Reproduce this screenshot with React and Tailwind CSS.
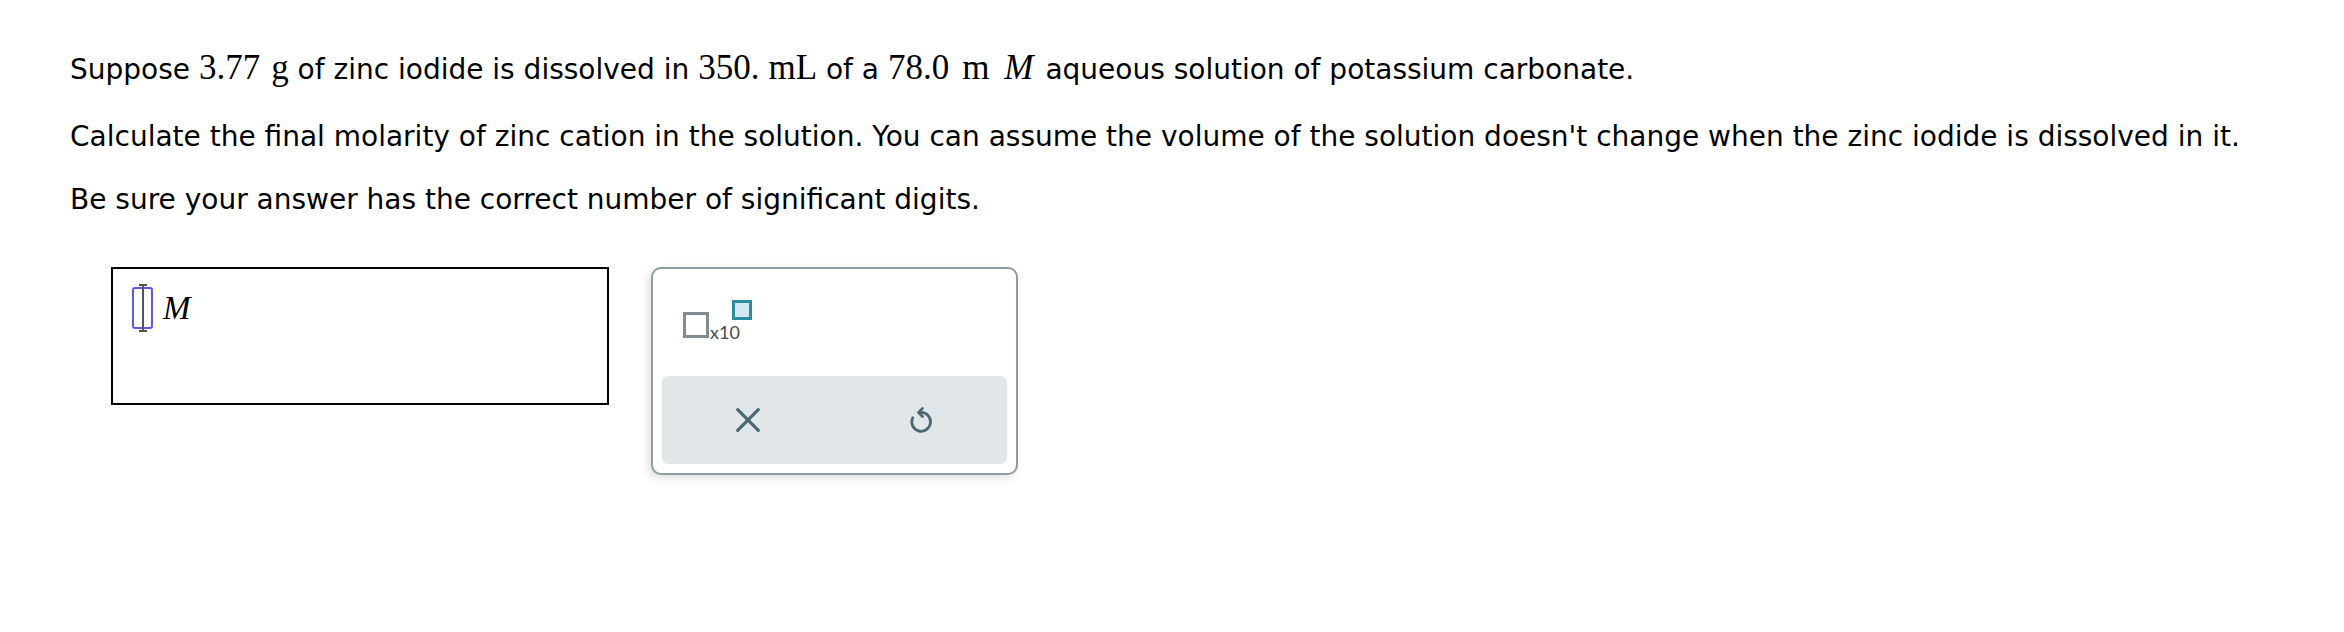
import React from 'react';

const serif = { fontFamily: '"Liberation Serif", "Times New Roman", serif' };

function Num({ children, className = '' }) {
  return (
    <span className={`text-[35px] leading-none ${className}`} style={serif}>
      {children}
    </span>
  );
}

function UndoIcon() {
  return (
    <svg width="30" height="30" viewBox="0 0 24 24" fill="none" stroke="#4b6872" strokeWidth="2.2" strokeLinecap="round" strokeLinejoin="round">
      <path d="M5.4 10.2 A7.5 7.5 0 1 0 12 6" />
      <path d="M13.2 2.8 L10 6 L13.2 9.2" />
    </svg>
  );
}

function CloseIcon() {
  return (
    <svg width="26" height="26" viewBox="0 0 24 24" fill="none" stroke="#4b6872" strokeWidth="3" strokeLinecap="round">
      <path d="M2.5 2.5 L21.5 21.5" />
      <path d="M21.5 2.5 L2.5 21.5" />
    </svg>
  );
}

export default function App() {
  return (
    <div
      className="min-h-screen bg-white text-black pl-[70px] pt-[50px]"
      style={{ fontFamily: '"DejaVu Sans", Verdana, sans-serif' }}
    >
      <p className="text-[28px] leading-[40px] whitespace-nowrap">
        Suppose <Num>3.77</Num><Num className="ml-[11px]">g</Num> of zinc iodide is dissolved in{' '}
        <Num>350.</Num><Num className="ml-[9px]">mL</Num> of a <Num>78.0</Num>
        <Num className="ml-[13px]">m</Num>
        <Num className="italic ml-[15px] mr-[3px]">M</Num> aqueous solution of potassium carbonate.
      </p>
      <p className="text-[28px] leading-[40px] mt-[27px] whitespace-nowrap">
        Calculate the final molarity of zinc cation in the solution. You can assume the volume of the solution doesn't change when the zinc iodide is dissolved in it.
      </p>
      <p className="text-[28px] leading-[40px] mt-[23px] whitespace-nowrap">
        Be sure your answer has the correct number of significant digits.
      </p>

      <div className="flex items-start gap-[42px] mt-[47px] ml-[41px]">
        <div className="w-[498px] h-[138px] border-2 border-black pl-[19px] pt-[18px]">
          <div className="flex items-center gap-[10px]">
            <div className="relative w-[21px] h-[42px] border-2 border-[#5b5be6] rounded-[3px]">
              <div className="absolute left-1/2 -translate-x-1/2 -top-[5px] -bottom-[5px] w-[2px] bg-[#555]" />
              <div className="absolute left-1/2 -translate-x-1/2 -top-[5px] w-[8px] h-[2px] bg-[#555]" />
              <div className="absolute left-1/2 -translate-x-1/2 -bottom-[5px] w-[8px] h-[2px] bg-[#555]" />
            </div>
            <span className="text-[33px] italic leading-none" style={serif}>M</span>
          </div>
        </div>

        <div className="w-[367px] h-[208px] border-2 border-[#8d9ea4] rounded-[10px] bg-white shadow-[-3px_3px_8px_rgba(0,0,0,0.12)] flex flex-col px-[9px] pb-[9px]">
          <div className="flex-1 pl-[21px] pt-[31px]">
            <div className="flex items-start">
              <div className="w-[26px] h-[26px] border-[3px] border-[#7f8d91] mt-[12px]" />
              <span
                className="text-[18px] leading-none text-[#4a4a4a] mt-[23px] ml-[1px]"
                style={{ fontFamily: 'Lato, "Open Sans", sans-serif' }}
              >
                x10
              </span>
              <div className="w-[20px] h-[20px] border-[3px] border-[#2a8ea3] bg-[#d3e9f1] -ml-[8px]" />
            </div>
          </div>
          <div className="h-[88px] bg-[#e1e6e9] rounded-[6px] flex">
            <button className="flex-1 flex items-center justify-center">
              <CloseIcon />
            </button>
            <button className="flex-1 flex items-center justify-center">
              <UndoIcon />
            </button>
          </div>
        </div>
      </div>
    </div>
  );
}
